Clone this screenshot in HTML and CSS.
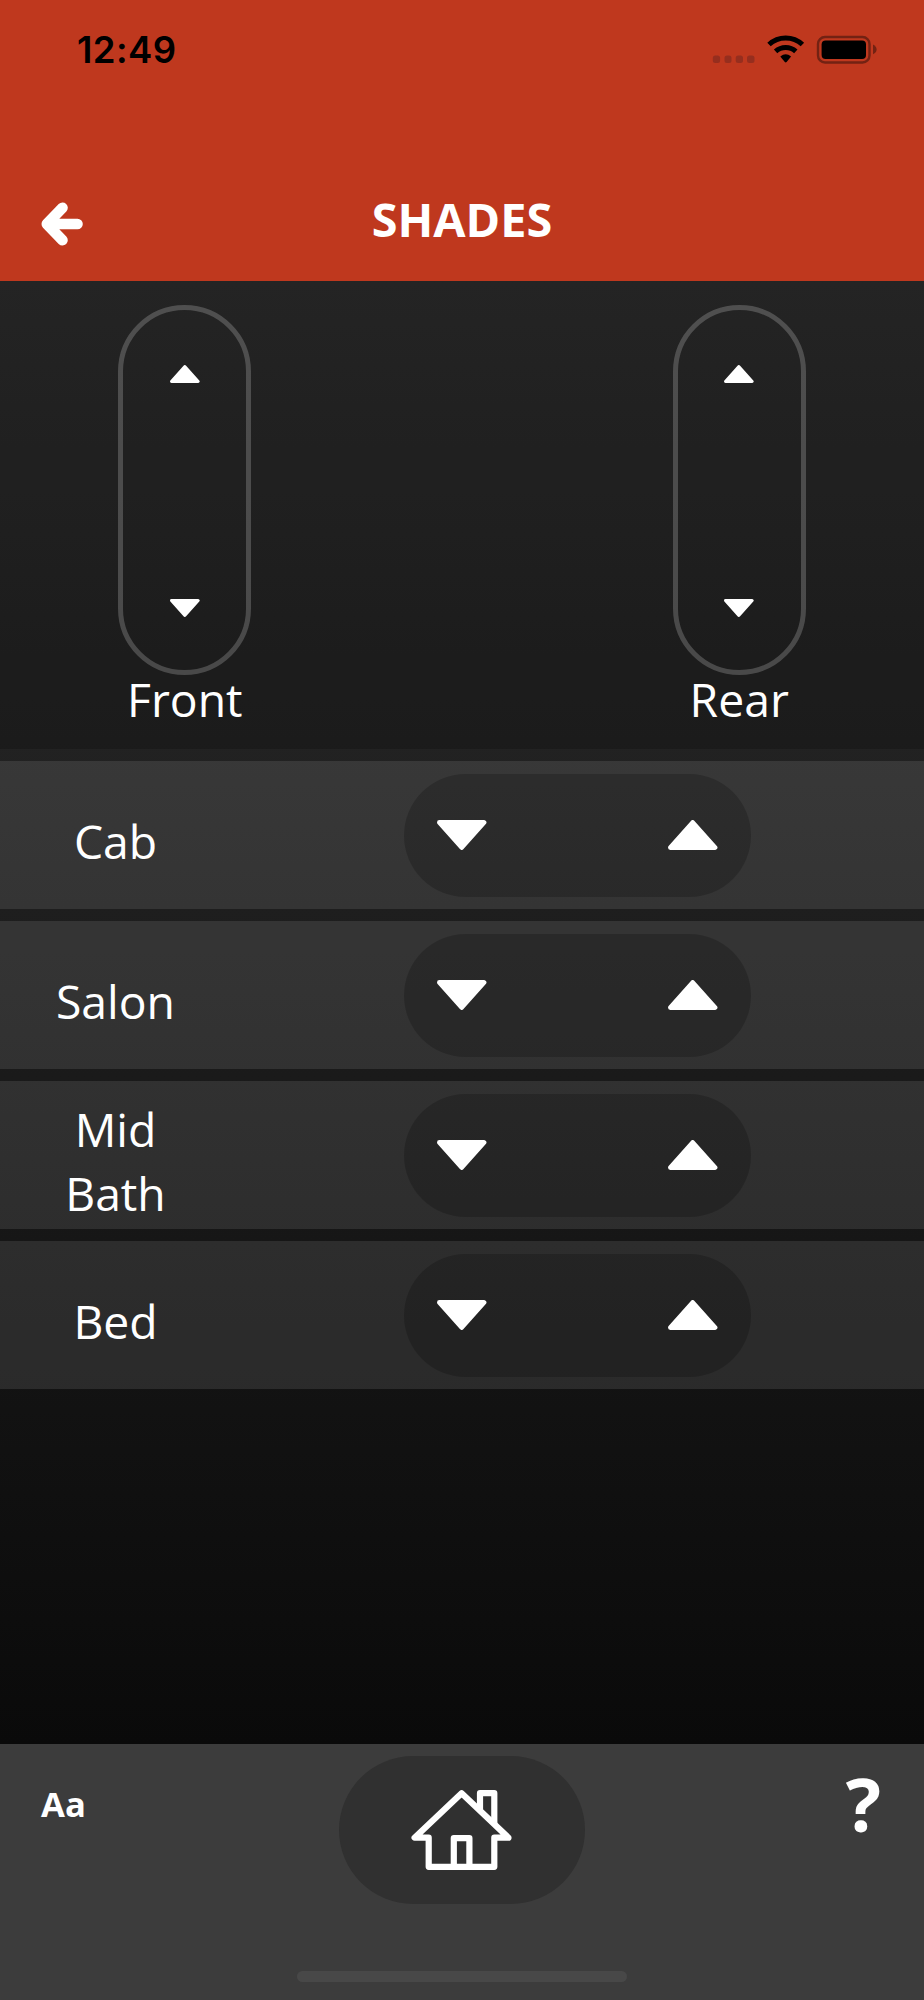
FILE: index.html
```html
<!DOCTYPE html>
<html lang="en">

<head>
  <meta charset="UTF-8">
  <meta name="viewport" content="width=device-width, initial-scale=1.0">
  <title>Shades</title>
  <link rel="stylesheet" href="styles.css">
</head>

<body>
  <!-- shared triangle, pointing up -->
  <svg class="defs" width="0" height="0">
    <symbol id="up" viewBox="0 0 50 30">
      <path d="M24.7 2.5 L47 27.5 H2.4 Z" fill="#fff" stroke="#fff" stroke-width="4.8" stroke-linejoin="round" />
    </symbol>
  </svg>

  <header>
    <div class="status">
      <span class="time">12:49</span>
      <svg class="status-icons" width="166" height="30" viewBox="0 0 166 30">
        <g fill="#962e1e">
          <rect x="0.8" y="20.5" width="7.3" height="7.5" rx="2.5" />
          <rect x="12.5" y="20.5" width="7" height="7.5" rx="2.5" />
          <rect x="23.7" y="20.5" width="7.3" height="7.5" rx="2.5" />
          <rect x="35" y="20.5" width="7.5" height="7.5" rx="2.5" />
        </g>
        <g fill="none" stroke="#000" stroke-width="5">
          <path d="M57 9.5 A24.5 24.5 0 0 1 90.4 9.5" />
          <path d="M63.6 16.3 A15 15 0 0 1 83.8 16.3" />
        </g>
        <path d="M68.3 21.5 Q73.7 17.2 79.1 21.5 L74.6 27 Q73.7 27.9 72.8 27 Z" />
        <rect x="106" y="2" width="51.5" height="25.5" rx="7" fill="none" stroke="#732213" stroke-width="2.4" />
        <rect x="109.6" y="5.5" width="44.4" height="18.6" rx="4" />
        <path d="M161 9.5 Q164.6 11.5 164.6 14.5 Q164.6 17.5 161 19.2 Z" fill="#732213" />
      </svg>
    </div>
    <div class="title-bar">
      <svg class="back" width="44" height="46" viewBox="0 0 44 46">
        <path d="M22.5 6.7 L6.8 23 L22.5 39.2 M7 23 H37.5 M10 20 V26" fill="none" stroke="#fff" stroke-width="10.6" stroke-linecap="round" stroke-linejoin="round" />
      </svg>
      <h1>SHADES</h1>
    </div>
  </header>

  <main>
    <section class="all-shades">
      <div class="group">
        <div class="rocker">
          <svg class="small"><use href="#up" /></svg>
          <svg class="small down"><use href="#up" /></svg>
        </div>
        <p>Front</p>
      </div>
      <div class="group">
        <div class="rocker">
          <svg class="small"><use href="#up" /></svg>
          <svg class="small down"><use href="#up" /></svg>
        </div>
        <p>Rear</p>
      </div>
    </section>

    <section class="rooms">
      <div class="room">
        <p>Cab</p>
        <div class="control">
          <svg class="large down"><use href="#up" /></svg>
          <svg class="large"><use href="#up" /></svg>
        </div>
      </div>
      <div class="room">
        <p>Salon</p>
        <div class="control">
          <svg class="large down"><use href="#up" /></svg>
          <svg class="large"><use href="#up" /></svg>
        </div>
      </div>
      <div class="room">
        <p>Mid Bath</p>
        <div class="control">
          <svg class="large down"><use href="#up" /></svg>
          <svg class="large"><use href="#up" /></svg>
        </div>
      </div>
      <div class="room">
        <p>Bed</p>
        <div class="control">
          <svg class="large down"><use href="#up" /></svg>
          <svg class="large"><use href="#up" /></svg>
        </div>
      </div>
    </section>
  </main>

  <footer>
    <div class="tools">
      <span class="text-size">Aa</span>
      <div class="home">
        <svg width="102" height="82" viewBox="0 0 102 82" fill="none" stroke="#fff" stroke-width="6.2" stroke-linecap="round" stroke-linejoin="round">
          <path d="M50.6 4.2 L3.6 48.7 H17.7 V77.8 H83.3 V48.7 H97.5 Z" />
          <path d="M69 20 V4.2 H83.3 V34" />
          <path d="M42.8 77.5 V49.2 H58.4 V77.5" />
        </svg>
      </div>
      <span class="help">?</span>
    </div>
    <div class="indicator"></div>
  </footer>
</body>

</html>
```
FILE: styles.css
```css
* {
  box-sizing: border-box;
}

body,
h1,
p {
  margin: 0;
}

body {
  display: flex;
  flex-direction: column;
  width: 924px;
  height: 2000px;
  font-family: "Open Sans", "Noto Sans", sans-serif;
  font-size: 46.3px;
  line-height: 64px;
  color: #fff;
  background-color: #3c3c3c;
}

svg {
  display: block;
}

.defs {
  position: absolute;
}

/* Header */
header {
  height: 281px;
  background-color: #bf381e;
}

.status {
  display: flex;
  justify-content: space-between;
  height: 187px;
  padding: 34px 46px 0 77px;
  color: #000;
}

.status-icons {
  margin-top: 1px;
}

.time {
  font-family: Inter, sans-serif;
  font-size: 36.5px;
  font-weight: 600;
  line-height: 32px;
  letter-spacing: 0.4px;
}

.title-bar {
  display: grid;
  grid-template-columns: 100px 1fr 100px;
  align-items: start;
}

.back {
  margin: 14px 0 0 40px;
}

h1 {
  font-size: 46.8px;
  font-weight: 700;
  line-height: 64px;
  text-align: center;
}

/* Shades */
main {
  height: 1463px;
  background: linear-gradient(#2d2d2d, #0a0a0a);
}

.all-shades {
  display: flex;
  justify-content: space-between;
  height: 468px;
  padding-top: 24px;
  background-color: rgba(0, 0, 0, 0.2);
}

.group {
  display: flex;
  flex-direction: column;
  align-items: center;
  width: 40%;
}

.group p {
  margin-top: -7px;
}

.rocker {
  display: flex;
  flex-direction: column;
  justify-content: space-between;
  align-items: center;
  width: 133px;
  height: 370px;
  padding: 55px 0 53px;
  border: 5px solid rgba(255, 255, 255, 0.2);
  border-radius: 67px;
}

.small {
  width: 30px;
  height: 18px;
}

.large {
  width: 50px;
  height: 30px;
}

.down {
  transform: scaleY(-1);
}

/* Rooms */
.rooms {
  display: flex;
  flex-direction: column;
  gap: 12px;
  padding-top: 12px;
}

.room {
  display: flex;
  align-items: center;
  height: 148px;
  background-color: rgba(255, 255, 255, 0.1);
}

.room p {
  width: 25%;
  padding: 14px 24px 0;
  text-align: center;
}

.control {
  display: flex;
  justify-content: space-between;
  align-items: center;
  width: 37.5%;
  height: 123px;
  margin-left: 18.75%;
  padding: 0 33px 0 32.5px;
  border-radius: 62px;
  background-color: rgba(0, 0, 0, 0.2);
}

/* Footer */
footer {
  flex: 1;
  padding-top: 12px;
}

.tools {
  display: flex;
  justify-content: space-between;
  height: 215px;
  padding: 0 43px 0 41px;
  font-weight: 700;
}

.text-size,
.help {
  width: 120px;
}

.text-size {
  padding-top: 16px;
  font-size: 34.65px;
}

.help {
  padding-top: 16px;
  font-size: 74px;
  text-align: right;
}

.home {
  display: flex;
  justify-content: center;
  align-items: center;
  width: 246.4px;
  height: 148px;
  margin-right: -2px;
  border-radius: 74px;
  background-color: #303030;
}

.indicator {
  width: 330px;
  height: 11px;
  margin: 0 auto;
  border-radius: 6px;
  background-color: #484848;
}
```
